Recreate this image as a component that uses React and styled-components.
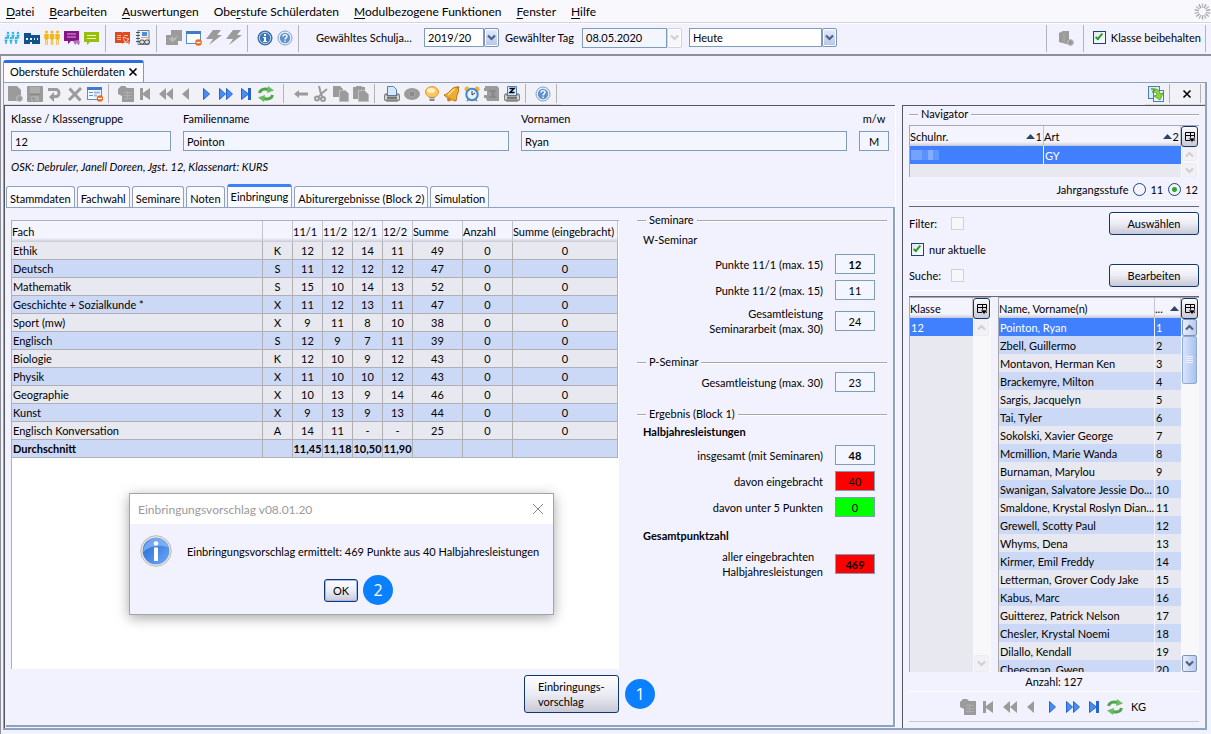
/*
  APP.JSX
    School administration window: menu, toolbars, the student record
    with its tabs, the navigator on the right and the result dialog.
*/

import React from 'react';
import styled, { createGlobalStyle, css } from 'styled-components';

const GlobalStyle = createGlobalStyle`
  *, *::before, *::after {
    box-sizing: border-box;
  }
  body {
    margin: 0;
    background: #f2f2ff;
    color: #000;
    font: 11px/15px Lato, 'Open Sans', sans-serif;
  }
  button, input, select, table {
    font: inherit;
    color: inherit;
  }
  button {
    padding: 0;
    border: 0;
    background: none;
  }
`;

/* ---------- Icons ---------- */

const grey = '#9b9b9b';

const person = (x, y, fill) => (
  <g fill={fill}>
    <circle cx={x} cy={y} r="1.5" />
    <path d={`M${x - 2.2} ${y + 2}h4.4v5h-1v6h-.9v-5h-.6v5h-.9v-6h-1z`} />
  </g>
);

const smallPerson = (x, y) => (
  <g fill="#35b6dc">
    <circle cx={x} cy={y} r="1.3" />
    <path d={`M${x - 1.9} ${y + 1.8}h3.8l-1 2v2h-1.800v-2z`} />
  </g>
);

const art = {
  group: (
    <>
      {smallPerson(4, 3)}
      {smallPerson(9, 3)}
      {smallPerson(14, 3)}
      {smallPerson(2, 8)}
      {smallPerson(7, 8)}
      {smallPerson(12, 8)}
    </>
  ),
  school: (
    <>
      <path d="M0 3h7v2h9v9H0z" fill="#10528c" />
      <path d="M2 8h2v2H2zm4 0h2v2H6zm4 0h1v2h-1zm3 0h1v2h-1zM6 12h2v2H6z" fill="#f2f2ff" />
    </>
  ),
  people: (
    <>
      {person(2.5, 2, '#f7b512')}
      {person(8, 2, '#f7b512')}
      {person(13.5, 2, '#f7b512')}
    </>
  ),
  chatPurple: (
    <>
      <path d="M0 1h15v10H7l-3 3v-3H0z" fill="#861487" />
      <path d="M3 4h9M3 7h9" stroke="#d7a7d8" />
      <path d="M9 11l5-1 2 2-1 3h-1l-1-2-2 2z" fill="#b774b8" />
    </>
  ),
  chatGreen: (
    <>
      <path d="M0 2h15v10H6l-3 3v-3H0z" fill="#98bf0c" />
      <path d="M3 5.500h9M3 8.500h9" stroke="#eef6c4" />
    </>
  ),
  bookRed: (
    <>
      <path d="M0 2h7l.5 1 .5-1h7v11H8l-.5 1-.5-1H0z" fill="#e2471e" />
      <path d="M2 5.500h4M2 7.500h4M2 9.500h4M9 5.500h4" stroke="#f7b9a6" />
      <path d="M8 7l6 2-2 1 3 4-1 1-3-4-1 2z" fill="#e2471e" stroke="#fff" strokeWidth=".6" />
    </>
  ),
  notebook: (
    <>
      <path d="M3 .5h11v14H3z" fill="#eef2f8" stroke="#6f7f95" />
      <path d="M1 2.500h4M1 5.500h4M1 8.500h4M1 11.500h4" stroke="#4a5563" />
      <path d="M7 2h5v4H7z" fill="#4a90d8" />
      <path d="M6 7.500h7" stroke="#e0a060" />
      <rect x="4.500" y="10" width="5" height="4" rx="2" fill="#ddd" stroke="#444" />
      <rect x="9.500" y="10" width="5" height="4" rx="2" fill="#ddd" stroke="#444" />
    </>
  ),
  swap: (
    <>
      <path d="M5 0h11v11h-4v4H0V5h5z" fill={grey} />
      <path d="M3 9l4-3v2c2 0 3-1 4-3 0 4-2 6-4 6v2z" fill="#b8b8b8" />
    </>
  ),
  windowMinus: (
    <>
      <rect x=".5" y="1.500" width="14" height="12" fill="#fbfdff" stroke="#5b8ccc" />
      <path d="M0 1h15v3H0z" fill="#3f7dcb" />
      <circle cx="12.500" cy="12.500" r="3.300" fill="#e9681d" />
      <path d="M10.500 12.500h4" stroke="#fff" strokeWidth="1.400" />
    </>
  ),
  formMinus: (
    <>
      <rect x=".5" y="1.500" width="14" height="12" fill="#f4f8ff" stroke="#5b8ccc" />
      <path d="M0 1h15v3H0z" fill="#3f7dcb" />
      <path d="M2 6.500h4M2 9.500h4" stroke="#6c93c7" />
      <path d="M7 6.500h6M7 9.500h3" stroke="#9fb9dc" strokeWidth="2" />
      <circle cx="13" cy="12.500" r="3.200" fill="#e9681d" />
      <path d="M11 12.500h4" stroke="#fff" strokeWidth="1.400" />
    </>
  ),
  bolt: <path d="M7 0h8l-4 5h5L3 15l4-6H0z" fill={grey} />,
  info: (
    <>
      <circle cx="8" cy="8" r="7" fill="#3f78b8" stroke="#2d619e" />
      <circle cx="8" cy="8" r="5.700" fill="none" stroke="#b9d3ee" />
      <path d="M7 4h2v2H7zM6 7h3v4h1v1H6v-1h1V8H6z" fill="#fff" />
    </>
  ),
  help: (
    <>
      <circle cx="8" cy="8" r="7" fill="#eaf2fb" stroke="#7aa2d0" />
      <circle cx="8" cy="8" r="5.200" fill="#5f92cd" />
      <path d="M6 6.500c0-2.500 4-2.500 4 0C10 8 8 7.800 8 9.500M8 10.500v1.500" fill="none" stroke="#fff" strokeWidth="1.400" />
    </>
  ),
  database: (
    <>
      <path d="M1 3l4-2h6v8l4 3-2 3-5-1-7-2z" fill={grey} />
      <path d="M6 3v10" stroke="#adadad" />
      <circle cx="12.500" cy="12.500" r="3" fill={grey} stroke="#c2c2c2" />
    </>
  ),
  pageNew: (
    <>
      <path d="M1 0h9l4 4v11H1z" fill={grey} />
      <circle cx="12.500" cy="12.500" r="3" fill={grey} stroke="#c4c4c4" />
    </>
  ),
  save: (
    <>
      <rect x="0" y="0" width="16" height="16" rx="1" fill={grey} />
      <path d="M3 1h10v6H3zM4 10h8v5H4z" fill="#adadad" />
      <path d="M3 8.500h10M5 12h2v3" stroke="#888" fill="none" />
    </>
  ),
  undoArrow: (
    <>
      <path d="M1 3.500h9a4 4 0 0 1 0 7H6" fill="none" stroke={grey} strokeWidth="3" />
      <path d="M7 6v10l-5-5z" fill={grey} />
    </>
  ),
  cross: <path d="M2.500 2.500l11 12M14 2L2 14" stroke={grey} strokeWidth="3" />,
  tableGrey: (
    <>
      <path d="M0 3l3-3h4l2 2h7v14H4V10L0 8z" fill={grey} />
      <path d="M6 6.500h8M6 9.500h8M6 12.500h8M9.500 5v9" stroke="#adadad" />
    </>
  ),
  first: <path d="M2 2h3v5l7-5v12L5 9v5H2z" fill={grey} />,
  rewind: <path d="M8 2v12L1 8zM15 2v12L8 8z" fill={grey} />,
  prev: <path d="M11 2v12L4 8z" fill={grey} />,
  next: <path d="M5.500 2.500v11l6-5.500z" fill="#4a8df2" stroke="#2565cf" />,
  forward: <path d="M1.500 2.500v11l6-5.500zM8.500 2.500v11l6-5.500z" fill="#4a8df2" stroke="#2565cf" />,
  last: (
    <>
      <path d="M3.500 2.500v11l7-5.500z" fill="#4a8df2" stroke="#2565cf" />
      <path d="M10 2h3v12h-3z" fill="#2565cf" />
    </>
  ),
  refresh: (
    <>
      <path d="M1.500 7c1-4 5-4.500 9-3.500" fill="none" stroke="#4ea64c" strokeWidth="3" />
      <path d="M10 0l6 4.500-7 2.500z" fill="#67bd60" />
      <path d="M14.500 9c-1 4-5 4.500-9 3.500" fill="none" stroke="#4ea64c" strokeWidth="3" />
      <path d="M6 16l-6-4.500 7-2.500z" fill="#67bd60" />
    </>
  ),
  back: <path d="M1 8l5-4v2.500h9v3H6V12z" fill={grey} />,
  cut: (
    <>
      <path d="M6 0l2 8 6-5M8 8l-3 4M8 8l2 4" fill="none" stroke={grey} strokeWidth="2" />
      <circle cx="4" cy="12.500" r="2" fill="none" stroke={grey} strokeWidth="2" />
      <circle cx="10" cy="13" r="2" fill="none" stroke={grey} strokeWidth="2" />
    </>
  ),
  copy: (
    <>
      <path d="M0 0h7l3 3v8H0z" fill={grey} />
      <path d="M6.500 4.500h6l3 3v8h-9z" fill={grey} stroke="#c0c0c0" />
    </>
  ),
  paste: (
    <>
      <path d="M0 1h3V0h6v1h3v12H0z" fill={grey} />
      <path d="M5.500 4.500h6l4 4v7h-10z" fill={grey} stroke="#c0c0c0" />
    </>
  ),
  print: (
    <>
      <path d="M3.500.5h6l3 3v6h-9z" fill="#d4e8ff" stroke="#4c80bd" />
      <path d="M1 8h2v2h10V8h2l1 6H0z" fill="#dcdcdc" stroke="#6d6d6d" />
      <path d="M3 11h10v2H3z" fill="#777" />
      <path d="M2 15h12" stroke="#555" />
    </>
  ),
  printZ: (
    <>
      <path d="M3.500.5h9v9h-9z" fill="#d4e8ff" stroke="#4c80bd" />
      <path d="M5.500 2.500h4.500L6 6.500h4.500" fill="none" stroke="#000" strokeWidth="1.500" />
      <path d="M1 8h2v2h10V8h2l1 6H0z" fill="#dcdcdc" stroke="#6d6d6d" />
      <path d="M3 11h10v2H3z" fill="#777" />
      <path d="M2 15h12" stroke="#555" />
    </>
  ),
  eye: (
    <>
      <ellipse cx="8" cy="8" rx="8" ry="6" fill={grey} />
      <circle cx="8" cy="8" r="3" fill="#8a8a8a" stroke="#a9a9a9" />
    </>
  ),
  bulb: (
    <>
      <ellipse cx="8" cy="6" rx="6.500" ry="5.500" fill="#ffc65c" stroke="#e59a2c" />
      <ellipse cx="7" cy="4.500" rx="4" ry="2.500" fill="#fff2cf" />
      <path d="M5.500 11h5v4h-5z" fill="#8d8d8d" />
      <path d="M5.500 12.500h5" stroke="#ccc" />
    </>
  ),
  bell: (
    <>
      <path d="M13 1c-4 0-5 2-7 4S3 8 0 9c3 3 7 5 12 6 1-2 0-5 2-8 1-2 1-4-1-6z" fill="#f0ac2e" stroke="#b9741a" />
      <path d="M11 3c-3 1-4 4-7 6" stroke="#ffe08b" fill="none" strokeWidth="1.500" />
      <circle cx="5" cy="13.500" r="2" fill="#c98221" />
      <circle cx="14" cy="1.500" r="1.200" fill="#b9741a" />
    </>
  ),
  clock: (
    <>
      <circle cx="3" cy="3" r="2.500" fill="#f2b03b" />
      <circle cx="13" cy="3" r="2.500" fill="#f2b03b" />
      <path d="M3 15l2-2M13 15l-2-2" stroke="#777" strokeWidth="1.500" />
      <circle cx="8" cy="8.500" r="5.700" fill="#e9f4ff" stroke="#3d88d1" strokeWidth="2" />
      <path d="M8 5v4l3-2" fill="none" stroke="#335" />
    </>
  ),
  sheetGrey: (
    <>
      <path d="M1 0h12l2 2v13H3l-1-3H0V9h3V5H0V2h1z" fill={grey} />
      <path d="M5 5h6L8 8l3 3H5" fill="none" stroke="#858585" strokeWidth="1.500" />
    </>
  ),
  export: (
    <>
      <rect x=".5" y=".5" width="11" height="12" fill="#dcecff" stroke="#4d7fae" />
      <rect x="5.500" y="4.500" width="10" height="11" fill="#eaf4ff" stroke="#4d7fae" />
      <path d="M3 3c5-1 9 1 9 5l3-1-3 7-6-4 3-1c0-2-1-3-5-3l3-2z" fill="#8bd838" stroke="#3f8c14" strokeWidth=".7" />
    </>
  ),
  close: <path d="M4.500 4.500l7 7M11.500 4.500l-7 7" stroke="#000" strokeWidth="1.600" />,
  columns: (
    <>
      <path d="M3.500 3.500h9v8h-9zM3 6.500h10M8.500 4v7" fill="none" stroke="#000" />
      <path d="M6.500 9h7L10 13.500z" fill="#000" stroke="#e6e6f2" strokeWidth=".6" />
    </>
  ),
};

const Svg = styled.svg`
  display: block;
  flex: none;
`;

const Icon = ({ name, size = 16 }) => (
  <Svg width={size} height={size} viewBox="0 0 16 16" aria-hidden="true">
    {art[name]}
  </Svg>
);

const Chevron = ({ up, color = '#4d6185' }) => (
  <Svg width="9" height="7" viewBox="0 0 9 7" aria-hidden="true">
    <path
      d={up ? 'M1 5.500l3.500-3.500L8 5.500' : 'M1 1.500L4.500 5 8 1.500'}
      fill="none"
      stroke={color}
      strokeWidth="2.200"
    />
  </Svg>
);

const Spinner = () => (
  <Svg width="17" height="17" viewBox="-8 -8 16 16" aria-hidden="true">
    {Array.from({ length: 14 }, (_, i) => (
      <path
        key={i}
        d="M0-3.500V-7.500"
        stroke={i % 2 ? '#a6a6a6' : '#b8b8b8'}
        strokeWidth="1.300"
        transform={`rotate(${i * 25.7})`}
      />
    ))}
  </Svg>
);

const InfoBall = () => (
  <Svg width="32" height="32" viewBox="0 0 32 32" aria-hidden="true">
    <defs>
      <linearGradient id="ball" x1="0" y1="0" x2="1" y2="1">
        <stop offset="0" stopColor="#1e66cf" />
        <stop offset="1" stopColor="#6fa9fb" />
      </linearGradient>
    </defs>
    <circle cx="16" cy="16" r="15.300" fill="#e4e4e2" stroke="#bcbcba" />
    <circle cx="16" cy="16" r="13.300" fill="url(#ball)" />
    <path d="M3 17C3 10 9 2.700 16 2.700c6 0 11.500 4 12.800 10C20 9 10 11 3 17z" fill="#8fbcf9" opacity=".7" />
    <circle cx="16" cy="8.500" r="2.300" fill="#fff" />
    <path d="M14 12.500h4V26h-4z" fill="#fff" />
  </Svg>
);

/* ---------- Shared controls ---------- */

const BarButton = styled.button`
  display: flex;
  align-items: center;
  justify-content: center;
  width: 20px;
  height: 20px;
`;

const Separator = styled.span`
  width: 1px;
  align-self: stretch;
  margin: 0 7px 0 ${props => (props.$wide ? 7 : 3)}px;
  background: #b3b3b8;
`;

const inset = css`
  border: 1px solid #7f9db9;
  background: #f4f6ff;
`;

const TextField = styled.input`
  ${inset}
  width: 100%;
  min-width: 0;
  height: 20px;
  padding: 0 3px;
  outline: 0;
  text-align: ${props => props.$align || 'left'};
`;

const PushButton = styled.button`
  width: ${props => props.$width || 90}px;
  min-height: 23px;
  padding: 3px ${props => (props.$align ? 13 : 6)}px;
  border: 1px solid #10386e;
  border-radius: 3px;
  background: linear-gradient(#fdfdff, #ececf6 50%, #c9c9d6);
  box-shadow: ${props => (props.$focused ? 'inset 0 0 0 1px #9db8f0' : 'none')};
  text-align: ${props => props.$align || 'center'};
  white-space: nowrap;
`;

const CheckBox = styled.input.attrs({ type: 'checkbox' })`
  appearance: none;
  position: relative;
  flex: none;
  width: 13px;
  height: 13px;
  margin: 0;
  border: 1px solid #1c4478;
  background: linear-gradient(135deg, #e4e4ee, #fff);

  &:checked::after {
    content: '';
    position: absolute;
    left: 3px;
    top: 0;
    width: 4px;
    height: 8px;
    border: solid #23a123;
    border-width: 0 2px 2px 0;
    transform: rotate(40deg);
  }

  &:disabled {
    border-color: #d0d0d6;
    background: #f7f7fa;
  }
`;

const Radio = styled.input.attrs({ type: 'radio' })`
  appearance: none;
  width: 13px;
  height: 13px;
  margin: 0;
  border: 1px solid #1c4478;
  border-radius: 50%;
  background: ${props =>
    props.defaultChecked ? 'radial-gradient(#2ba52b 2px, #f2f4f8 3px)' : '#f4f4fa'};
`;

const DropBox = styled.span`
  display: flex;
  width: ${props => props.$width}px;
  height: ${props => (props.$disabled ? 20 : 19)}px;
`;

const Select = styled.select`
  appearance: none;
  flex: 1;
  min-width: 0;
  padding: 0 3px;
  border: 1px solid #7f9db9;
  border-radius: 0;
  background: #fff;
`;

const DropArrow = styled.span`
  display: flex;
  flex: none;
  align-items: center;
  justify-content: center;
  width: 15px;
  border: 1px solid ${props => (props.$disabled ? '#d2d2dc' : '#7c93bd')};
  border-radius: 2px;
  background: ${props =>
    props.$disabled ? '#f7f7fb' : 'linear-gradient(#e6ecfb, #b4c4ea)'};
  box-shadow: inset 0 0 0 1px #fff;
`;

const DropDown = ({ label, width, value }) => (
  <DropBox $width={width}>
    <Select aria-label={label} defaultValue={value}>
      <option>{value}</option>
    </Select>
    <DropArrow>
      <Chevron />
    </DropArrow>
  </DropBox>
);

/* ---------- Window ---------- */

const Window = styled.div`
  position: relative;
  display: flex;
  flex-direction: column;
  height: 100vh;
  min-height: 700px;
`;

const MenuBar = styled.nav`
  display: flex;
  align-items: center;
  gap: 15px;
  height: 23px;
  padding: 0 0 0 6px;
  border-bottom: 1px solid #d3d3e4;
  background: #f8f8fd;
  font-size: 12px;

  svg {
    margin-left: auto;
  }
`;

const MenuItem = styled.a`
  color: inherit;
  text-decoration: none;

  u {
    text-underline-offset: 2px;
  }
`;

const MainBar = styled.div`
  display: flex;
  align-items: center;
  height: 33px;
  padding: 1px 5px 4px 2px;
  border-top: 1px solid #fff;
  border-bottom: 2px solid #8f8f97;

  ${Separator} {
    height: 27px;
  }
`;

const BarLabel = styled.label`
  width: ${props => props.$width}px;
  margin: 0 5px 0 ${props => props.$indent || 6}px;
  white-space: nowrap;
`;

const Spacer = styled.span`
  width: 7px;
`;

const BarEnd = styled.div`
  display: flex;
  align-items: center;
  align-self: stretch;
  margin-left: auto;

  ${Separator} {
    margin: 0 9px 0 7px;
  }
  ${Separator}:last-child {
    margin: 0 0 0 4px;
  }
`;

const CheckLabel = styled.label`
  display: flex;
  align-items: center;
  gap: 5px;
`;

const Frame = styled.div`
  display: flex;
  flex: 1;
  flex-direction: column;
  min-height: 0;
  margin-right: 2px;
  padding: 4px 2px 4px 2px;
  border-left: 1px solid #8f8f97;
`;

const DocTab = styled.div`
  display: flex;
  align-items: center;
  align-self: flex-start;
  height: 22px;
  padding: 0 2px 2px 6px;
  border: 1px solid #7d9bc0;
  border-top: 3px solid #2f6bdd;
  border-bottom: 0;
  border-radius: 3px 3px 0 0;
  background: #fbfbff;
`;

const Document = styled.div`
  display: flex;
  flex: 1;
  flex-direction: column;
  min-height: 0;
  border: 1px solid #8ea3c0;
  border-right-width: 2px;
  border-bottom-width: 2px;
`;

const DocBars = styled.div`
  display: flex;
  justify-content: space-between;
  height: 22px;
`;

const DocBar = styled.div`
  display: flex;
  align-items: center;
  padding: 1px 0 1px 1px;
  border-bottom: 1px solid #d9d9e0;
  background: #f1f1f7;

  ${Separator}:last-child {
    margin-right: 4px;
  }
`;

const Columns = styled.div`
  display: flex;
  flex: 1;
  gap: 7px;
  min-height: 0;
`;

/* ---------- Student record ---------- */

const Record = styled.main`
  display: flex;
  flex: 1;
  flex-direction: column;
  min-width: 0;
  padding: 5px 0 1px 1px;
  border: solid #55555c;
  border-width: 1px 0 0 1px;
  box-shadow: 1px 0 #fff;
`;

const PersonForm = styled.div`
  display: grid;
  grid-template-columns: 160px 1fr 1fr 30px;
  gap: 5px 12px;
  padding: 0 6px 0 5px;
`;

const PersonField = styled.label`
  display: flex;
  flex-direction: column;
  gap: 5px;
  text-align: ${props => props.$align || 'left'};
`;

const Note = styled.p`
  margin: 8px 5px 10px;
  font-style: italic;
`;

const TabStrip = styled.div`
  display: flex;
  align-items: flex-end;
  gap: 2px;
  height: 23px;
`;

const Tab = styled.button`
  height: ${props => (props.$active ? 23 : 21)}px;
  padding: ${props => (props.$active ? '0 3px 2px' : '2px 3px 0')};
  border: 1px solid #8ea3c0;
  border-bottom: 0;
  border-radius: 3px 3px 0 0;
  background: #fbfbff;
  white-space: nowrap;
  ${props => props.$active && 'border-top: 3px solid #3f7ffb;'}
`;

const TabPanel = styled.section`
  display: grid;
  flex: 1;
  grid-template-columns: minmax(0, 1fr) 250px;
  grid-template-rows: minmax(0, 1fr) auto;
  gap: 6px 18px;
  min-height: 0;
  padding: 4px 6px 12px 5px;
  border: solid #8ea3c0;
  border-width: 1px 2px 2px 0;
`;

const Sheet = styled.div`
  margin-top: 8px;
  border: solid #b0b0b8;
  border-width: 1px 0 0 1px;
  background: #fff;
`;

const GradeTable = styled.table`
  width: calc(100% - 1px);
  border-collapse: separate;
  border-spacing: 0;
  table-layout: fixed;

  th {
    height: 21px;
    padding: 0;
    border-right: 1px solid #c4c4cc;
    background: linear-gradient(#f4f4ff 17px, #c9c9d6);
    font-weight: normal;
    text-align: left;
    white-space: nowrap;
  }
  td {
    height: 18px;
    padding: 0 1px;
    border: solid #b0b0b4;
    border-width: 0 1px 1px 0;
    text-align: center;
  }
  td:first-child {
    text-align: left;
  }
  tbody tr {
    background: #e8e8f1;
  }
  tbody tr:nth-child(even) {
    background: #ccd9f6;
  }
  tbody tr:last-child {
    font-weight: bold;
  }
  tbody tr:last-child td {
    padding: 0;
  }
  tbody tr:last-child td:first-child {
    padding-left: 1px;
  }
`;

const SheetActions = styled.div`
  display: flex;
  align-items: center;
  justify-content: flex-end;
  margin-right: -36px;
  gap: 6px;
`;

const Badge = styled.span`
  display: flex;
  flex: none;
  align-items: center;
  justify-content: center;
  width: 30px;
  height: 30px;
  border-radius: 50%;
  background: #0a80ff;
  color: #fff;
  font: 16px 'Open Sans', sans-serif;
`;

const Group = styled.fieldset`
  display: flex;
  flex-direction: column;
  gap: 6px;
  min-width: 0;
  margin: 0;
  padding: ${props => props.$before || 2}px 0 ${props => props.$after || 0}px;
  border: 0;
  border-top: 1px solid #a6a6ae;
  box-shadow: inset 0 1px #fff;
`;

const GroupTitle = styled.legend`
  height: 16px;
  margin-left: 9px;
  padding: 0 3px;
  background: #f2f2ff;
`;

const GroupHead = styled.div`
  margin-left: 6px;
  line-height: ${props => (props.$strong ? 15 : 16)}px;
  font-weight: ${props => (props.$strong ? 'bold' : 'normal')};
  ${props => props.$apart && 'margin-top: 5px;'}
`;

const Reading = styled.label`
  display: grid;
  grid-template-columns: 1fr 40px;
  align-items: center;
  gap: 12px;
  padding-right: 12px;
  text-align: right;
  white-space: pre-line;

  span {
    justify-self: end;
    text-align: ${props => (props.$left ? 'left' : 'right')};
  }
  input {
    text-align: center;
    font-weight: ${props => (props.$strong ? 'bold' : 'normal')};
    ${props => props.$color && `background: ${props.$color};`}
  }
`;

const Value = ({ label, value, strong, color, left }) => (
  <Reading $strong={strong} $color={color} $left={left}>
    <span>{label}</span>
    <TextField readOnly value={value} />
  </Reading>
);

/* ---------- Navigator ---------- */

const Navigator = styled.aside`
  display: flex;
  flex-direction: column;
  width: 303px;
  min-height: 0;
  padding: 0 6px 6px;
  border-top: 1px solid #55555c;
  border-left: 1px solid #55555c;
`;

const Block = styled.div`
  display: flex;
  flex-direction: column;
  min-height: 0;
  padding: 3px 0 2px;
  border-bottom: 1px solid #fff;
`;

const Rule = styled.hr`
  width: 100%;
  height: 1px;
  margin: 5px 0 0;
  border: 0;
  background: #66666c;
`;

const NavRow = styled.div`
  display: flex;
  align-items: center;
  height: 26px;

  button {
    margin-left: auto;
  }
`;

const FilterLabel = styled.label`
  width: 42px;
`;

const FilterCheck = styled(CheckLabel)`
  margin-left: 2px;
`;

const YearRow = styled.div`
  display: flex;
  align-items: center;
  justify-content: flex-end;
  gap: 5px;
  height: 18px;
  padding-right: 1px;

  label {
    display: flex;
    align-items: center;
    gap: 4px;
  }
`;

const ListBox = styled.div`
  display: flex;
  width: ${props => (props.$width ? `${props.$width}px` : 'auto')};
  flex: ${props => (props.$width ? 'none' : 1)};
  height: ${props => (props.$height ? `${props.$height}px` : 'auto')};
  min-width: 0;
  border: solid #a8a8b0;
  border-width: 1px 0 0 1px;
`;

/* a fixed-height list must not stretch in the group's column */
const ShortListBox = styled(ListBox)`
  flex: none;
`;

const ListView = styled.div`
  flex: 1;
  min-width: 0;
  overflow: hidden;
  background: #e8e8f1;
`;

const ListTable = styled.table`
  width: 100%;
  border-spacing: 0;
  table-layout: fixed;

  th {
    height: 20px;
    padding: 0 1px 0 0;
    border-right: 1px solid #c4c4cc;
    background: linear-gradient(#f4f4ff 16px, #c9c9d6);
    font-weight: normal;
    text-align: left;
    white-space: nowrap;
  }
  td {
    height: 18px;
    padding: 0 0 0 1px;
    border-right: 1px solid #f4f4fc;
    white-space: nowrap;
  }
  td:last-child {
    border-right: 0;
  }
  tbody tr:nth-child(even) {
    background: #ccd9f6;
  }
  tbody tr:first-child {
    background: #4080ff;
    color: #fff;
  }
`;

const HeadCell = styled.span`
  display: flex;
  align-items: center;
  justify-content: space-between;

  i {
    display: flex;
    align-items: center;
    gap: 1px;
    font-style: normal;
  }
`;

const SortMark = () => (
  <Svg width="9" height="5" viewBox="0 0 9 5" aria-hidden="true">
    <path d="M0 5L4.500 0 9 5z" fill="#2b4469" />
  </Svg>
);

const ScrollSide = styled.div`
  display: flex;
  flex-direction: column;
  width: 18px;
  background: #f8f8fb;
`;

const ColumnButton = styled.button`
  display: flex;
  align-items: center;
  justify-content: center;
  width: 17px;
  height: 21px;
  border: 1px solid #10386e;
  border-radius: 3px;
  background: linear-gradient(#fdfdff, #c9c9d6);
`;

const ScrollButton = styled.button`
  display: flex;
  align-items: center;
  justify-content: center;
  width: 15px;
  height: ${props => (props.$flat ? 14 : 17)}px;
  margin: 0 1px;
  border: 1px solid ${props => (props.$off ? '#ececf1' : '#7c93bd')};
  border-radius: 2px;
  background: ${props => (props.$off ? '#f2f2f6' : 'linear-gradient(90deg, #e9effc, #b9c8ec)')};

  &:last-child {
    margin-top: auto;
  }
`;

const ScrollThumb = styled.div`
  display: flex;
  align-items: center;
  justify-content: center;
  width: 15px;
  height: 48px;
  margin: 0 1px;
  border: 1px solid #8fa9d8;
  border-radius: 2px;
  background: linear-gradient(90deg, #dbe5fb, #a9c1f0);
`;

const Redacted = styled.span`
  display: block;
  width: 28px;
  height: 10px;
  background: linear-gradient(90deg, #74a2ff 0 40%, #5a91ff 40% 60%, #86aeff 60% 80%, #6196ff 80%);
`;

const Lists = styled.div`
  display: flex;
  flex: 1;
  gap: 7px;
  min-height: 0;
`;

const Count = styled.div`
  padding: 2px 0;
  border-bottom: 1px solid #fff;
  text-align: center;
`;

const PageBar = styled.div`
  display: flex;
  align-items: center;
  justify-content: center;
  gap: 1px;
  height: 30px;
  padding-right: 4px;
  border-bottom: 1px solid #c8c8d0;

  b {
    margin-left: 5px;
    font-weight: normal;
  }
`;

/* ---------- Dialog ---------- */

const Dialog = styled.div`
  position: absolute;
  left: 129px;
  top: 493px;
  width: 425px;
  height: 122px;
  border: 1px solid #a3a3a8;
  background: #f2f2ff;
  box-shadow: 0 3px 12px rgba(0, 0, 0, 0.35);
`;

const DialogTitle = styled.div`
  display: flex;
  align-items: center;
  justify-content: space-between;
  height: 30px;
  padding: 0 8px;
  background: #fff;
  color: #9a9a9a;
  font-size: 12px;
`;

const DialogBody = styled.div`
  display: flex;
  align-items: center;
  gap: 15px;
  height: 54px;
  padding: 0 10px;
  white-space: nowrap;
`;

const DialogActions = styled.div`
  display: flex;
  align-items: center;
  justify-content: center;
  gap: 5px;
  height: 24px;
  padding-left: 34px;
`;

/* ---------- Data ---------- */

const menu = [
  ['', 'D', 'atei'],
  ['', 'B', 'earbeiten'],
  ['', 'A', 'uswertungen'],
  ['Obe', 'r', 'stufe Schülerdaten'],
  ['', 'M', 'odulbezogene Funktionen'],
  ['', 'F', 'enster'],
  ['', 'H', 'ilfe'],
];

const mainIcons = [
  ['group', 'school', 'people', 'chatPurple', 'chatGreen'],
  ['bookRed', 'notebook'],
  ['swap', 'windowMinus', 'bolt', 'bolt'],
  ['info', 'help'],
];

const docIcons = [
  ['pageNew', 'save', 'undoArrow', 'cross', 'formMinus'],
  ['tableGrey', 'first', 'rewind', 'prev', 'next', 'forward', 'last', 'refresh'],
  ['back', 'cut', 'copy', 'paste'],
  ['print', 'eye', 'bulb', 'bell', 'clock', 'sheetGrey', 'printZ'],
  ['help'],
];

const pageIcons = ['tableGrey', 'first', 'rewind', 'prev', 'next', 'forward', 'last', 'refresh'];

const tabs = [
  'Stammdaten',
  'Fachwahl',
  'Seminare',
  'Noten',
  'Einbringung',
  'Abiturergebnisse (Block 2)',
  'Simulation',
];

const columns = [
  ['Fach', null],
  ['', 30],
  ['11/1', 30],
  ['11/2', 30],
  ['12/1', 30],
  ['12/2', 30],
  ['Summe', 50],
  ['Anzahl', 50],
  ['Summe (eingebracht)', 105],
];

const grades = [
  ['Ethik', 'K', 12, 12, 14, 11, 49, 0, 0],
  ['Deutsch', 'S', 11, 12, 12, 12, 47, 0, 0],
  ['Mathematik', 'S', 15, 10, 14, 13, 52, 0, 0],
  ['Geschichte + Sozialkunde *', 'X', 11, 12, 13, 11, 47, 0, 0],
  ['Sport (mw)', 'X', 9, 11, 8, 10, 38, 0, 0],
  ['Englisch', 'S', 12, 9, 7, 11, 39, 0, 0],
  ['Biologie', 'K', 12, 10, 9, 12, 43, 0, 0],
  ['Physik', 'X', 11, 10, 10, 12, 43, 0, 0],
  ['Geographie', 'X', 10, 13, 9, 14, 46, 0, 0],
  ['Kunst', 'X', 9, 13, 9, 13, 44, 0, 0],
  ['Englisch Konversation', 'A', 14, 11, '-', '-', 25, 0, 0],
  ['Durchschnitt', '', '11,45', '11,18', '10,50', '11,90', '', '', ''],
];

const students = [
  'Pointon, Ryan',
  'Zbell, Guillermo',
  'Montavon, Herman Ken',
  'Brackemyre, Milton',
  'Sargis, Jacquelyn',
  'Tai, Tyler',
  'Sokolski, Xavier George',
  'Mcmillion, Marie Wanda',
  'Burnaman, Marylou',
  'Swanigan, Salvatore Jessie Do...',
  'Smaldone, Krystal Roslyn Dian...',
  'Grewell, Scotty Paul',
  'Whyms, Dena',
  'Kirmer, Emil Freddy',
  'Letterman, Grover Cody Jake',
  'Kabus, Marc',
  'Guitterez, Patrick Nelson',
  'Chesler, Krystal Noemi',
  'Dilallo, Kendall',
  'Cheesman, Gwen',
];

const IconGroups = ({ groups, wideAfter }) =>
  groups.map((group, i) => (
    <React.Fragment key={i}>
      {group.map((name, n) => (
        <BarButton key={n} aria-label={name}>
          <Icon name={name} />
        </BarButton>
      ))}
      <Separator $wide={i === wideAfter} />
    </React.Fragment>
  ));

const Grades = () => (
  <Sheet>
    <GradeTable>
      <colgroup>
        {columns.map(([name, width], i) => (
          <col key={i} width={width || undefined} />
        ))}
      </colgroup>
      <thead>
        <tr>
          {columns.map(([name], i) => (
            <th key={i}>{name}</th>
          ))}
        </tr>
      </thead>
      <tbody>
        {grades.map(row => (
          <tr key={row[0]}>
            {row.map((cell, i) => (
              <td key={i}>{cell}</td>
            ))}
          </tr>
        ))}
      </tbody>
    </GradeTable>
  </Sheet>
);

const Results = () => (
  <div>
    <Group $before={4} $after={18}>
      <GroupTitle>Seminare</GroupTitle>
      <GroupHead>W-Seminar</GroupHead>
      <Value label="Punkte 11/1 (max. 15)" value="12" strong />
      <Value label="Punkte 11/2 (max. 15)" value="11" />
      <Value label={'Gesamtleistung\nSeminararbeit (max. 30)'} value="24" />
    </Group>
    <Group $after={14}>
      <GroupTitle>P-Seminar</GroupTitle>
      <Value label="Gesamtleistung (max. 30)" value="23" />
    </Group>
    <Group>
      <GroupTitle>Ergebnis (Block 1)</GroupTitle>
      <GroupHead $strong>Halbjahresleistungen</GroupHead>
      <Value label="insgesamt (mit Seminaren)" value="48" strong />
      <Value label="davon eingebracht" value="40" color="#f00" />
      <Value label="davon unter 5 Punkten" value="0" color="#0f0" />
      <GroupHead $strong $apart>
        Gesamtpunktzahl
      </GroupHead>
      <Value
        label={'aller eingebrachten\nHalbjahresleistungen'}
        value="469"
        color="#f00"
        strong
        left
      />
    </Group>
  </div>
);

const Side = ({ active, flat }) => (
  <ScrollSide>
    <ColumnButton aria-label="Spalten">
      <Icon name="columns" />
    </ColumnButton>
    <ScrollButton $off={!active} $flat={flat} aria-label="Nach oben">
      <Chevron up color={active ? undefined : '#cfcfd4'} />
    </ScrollButton>
    {active && (
      <ScrollThumb>
        <Svg width="7" height="8" viewBox="0 0 7 8" aria-hidden="true">
          <path d="M0 .5h7M0 2.500h7M0 4.500h7M0 6.500h7" stroke="#eef3ff" />
        </Svg>
      </ScrollThumb>
    )}
    <ScrollButton $off={!active} $flat={flat} aria-label="Nach unten">
      <Chevron color={active ? undefined : '#cfcfd4'} />
    </ScrollButton>
  </ScrollSide>
);

const NavigatorPane = () => (
  <Navigator>
    <Group $before={3}>
      <GroupTitle>Navigator</GroupTitle>
      <ShortListBox $height={52}>
        <ListView>
          <ListTable>
            <colgroup>
              <col width="134" />
              <col />
            </colgroup>
            <thead>
              <tr>
                <th>
                  <HeadCell>
                    Schulnr.
                    <i>
                      <SortMark />1
                    </i>
                  </HeadCell>
                </th>
                <th>
                  <HeadCell>
                    Art
                    <i>
                      <SortMark />2
                    </i>
                  </HeadCell>
                </th>
              </tr>
            </thead>
            <tbody>
              <tr>
                <td>
                  <Redacted />
                </td>
                <td>GY</td>
              </tr>
            </tbody>
          </ListTable>
        </ListView>
        <Side flat />
      </ShortListBox>
    </Group>
    <Block>
      <YearRow>
        Jahrgangsstufe
        <label>
          <Radio name="year" />
          11
        </label>
        <label>
          <Radio name="year" defaultChecked />
          12
        </label>
      </YearRow>
    </Block>
    <Rule />
    <Block>
      <NavRow>
        <FilterLabel htmlFor="filter">Filter:</FilterLabel>
        <CheckBox id="filter" disabled />
        <PushButton>Auswählen</PushButton>
      </NavRow>
      <NavRow>
        <FilterCheck>
          <CheckBox defaultChecked />
          nur aktuelle
        </FilterCheck>
      </NavRow>
      <NavRow>
        <FilterLabel htmlFor="search">Suche:</FilterLabel>
        <CheckBox id="search" disabled />
        <PushButton>Bearbeiten</PushButton>
      </NavRow>
    </Block>
    <Rule />
    <Lists>
      <ListBox $width={82}>
        <ListView>
          <ListTable>
            <thead>
              <tr>
                <th>Klasse</th>
              </tr>
            </thead>
            <tbody>
              <tr>
                <td>12</td>
              </tr>
            </tbody>
          </ListTable>
        </ListView>
        <Side />
      </ListBox>
      <ListBox>
        <ListView>
          <ListTable>
            <colgroup>
              <col />
              <col width="26" />
            </colgroup>
            <thead>
              <tr>
                <th>Name, Vorname(n)</th>
                <th>
                  <HeadCell>
                    ...
                    <i>
                      <SortMark />
                    </i>
                  </HeadCell>
                </th>
              </tr>
            </thead>
            <tbody>
              {students.map((name, i) => (
                <tr key={name}>
                  <td>{name}</td>
                  <td>{i + 1}</td>
                </tr>
              ))}
            </tbody>
          </ListTable>
        </ListView>
        <Side active />
      </ListBox>
    </Lists>
    <Count>Anzahl: 127</Count>
    <PageBar>
      {pageIcons.map(name => (
        <BarButton key={name} aria-label={name}>
          <Icon name={name} />
        </BarButton>
      ))}
      <b>KG</b>
    </PageBar>
  </Navigator>
);

const ResultDialog = () => (
  <Dialog role="dialog" aria-label="Einbringungsvorschlag">
    <DialogTitle>
      Einbringungsvorschlag v08.01.20
      <button aria-label="Schließen">
        <Svg width="14" height="14" viewBox="0 0 14 14">
          <path d="M2 2l10 10M12 2L2 12" stroke="#8a8a8a" />
        </Svg>
      </button>
    </DialogTitle>
    <DialogBody>
      <InfoBall />
      Einbringungsvorschlag ermittelt: 469 Punkte aus 40 Halbjahresleistungen
    </DialogBody>
    <DialogActions>
      <PushButton $width={34} $focused>
        OK
      </PushButton>
      <Badge>2</Badge>
    </DialogActions>
  </Dialog>
);

const App = () => (
  <Window>
    <GlobalStyle />
    <MenuBar>
      {menu.map(([before, key, after]) => (
        <MenuItem key={after} href="#">
          {before}
          <u>{key}</u>
          {after}
        </MenuItem>
      ))}
      <Spinner />
    </MenuBar>
    <MainBar>
      <IconGroups groups={mainIcons} />
      <BarLabel $indent={10} $width={103}>
        Gewähltes Schulja...
      </BarLabel>
      <DropDown label="Gewähltes Schuljahr" width={75} value="2019/20" />
      <BarLabel htmlFor="day" $width={72}>
        Gewählter Tag
      </BarLabel>
      <DropBox $width={100} $disabled>
        <TextField id="day" readOnly value="08.05.2020" />
        <DropArrow $disabled>
          <Chevron color="#cfcfd8" />
        </DropArrow>
      </DropBox>
      <Spacer />
      <DropDown label="Zeitraum" width={148} value="Heute" />
      <BarEnd>
        <Separator />
        <BarButton aria-label="Datenbank">
          <Icon name="database" />
        </BarButton>
        <Separator />
        <CheckLabel>
          <CheckBox defaultChecked />
          Klasse beibehalten
        </CheckLabel>
        <Separator />
      </BarEnd>
    </MainBar>
    <Frame>
      <DocTab>
        Oberstufe Schülerdaten
        <button aria-label="Schließen">
          <Icon name="close" />
        </button>
      </DocTab>
      <Document>
        <DocBars>
          <DocBar>
            <IconGroups groups={docIcons} wideAfter={1} />
          </DocBar>
          <DocBar>
            <BarButton aria-label="Exportieren">
              <Icon name="export" />
            </BarButton>
            <Separator />
            <BarButton aria-label="Schließen">
              <Icon name="close" />
            </BarButton>
            <Separator />
          </DocBar>
        </DocBars>
        <Columns>
          <Record>
            <PersonForm>
              <PersonField>
                Klasse / Klassengruppe
                <TextField readOnly value="12" />
              </PersonField>
              <PersonField>
                Familienname
                <TextField readOnly value="Pointon" />
              </PersonField>
              <PersonField>
                Vornamen
                <TextField readOnly value="Ryan" />
              </PersonField>
              <PersonField $align="center">
                m/w
                <TextField readOnly value="M" $align="center" />
              </PersonField>
            </PersonForm>
            <Note>OSK: Debruler, Janell Doreen, Jgst. 12, Klassenart: KURS</Note>
            <TabStrip>
              {tabs.map(name => (
                <Tab key={name} $active={name === 'Einbringung'}>
                  {name}
                </Tab>
              ))}
            </TabStrip>
            <TabPanel>
              <Grades />
              <Results />
              <SheetActions>
                <PushButton $width={95} $align="left">
                  Einbringungs-
                  <br />
                  vorschlag
                </PushButton>
                <Badge>1</Badge>
              </SheetActions>
            </TabPanel>
          </Record>
          <NavigatorPane />
        </Columns>
      </Document>
    </Frame>
    <ResultDialog />
  </Window>
);

export default App;
